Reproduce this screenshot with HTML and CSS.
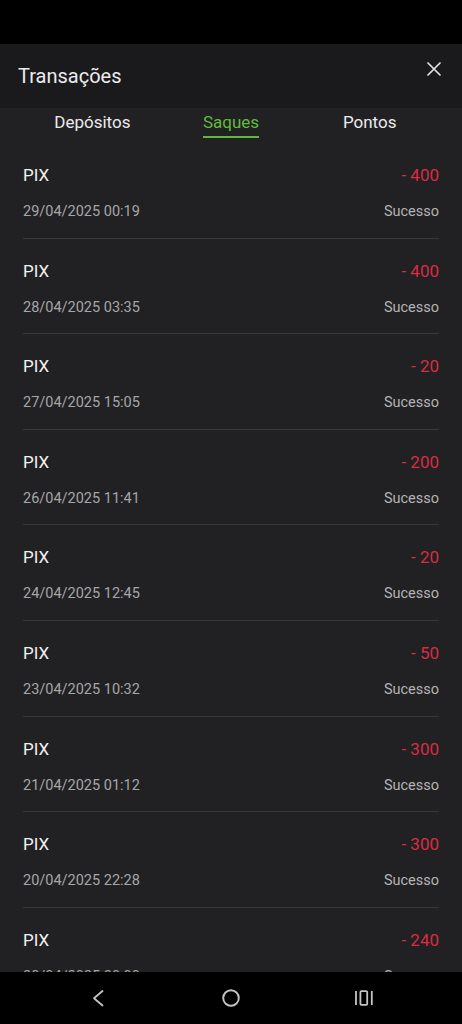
FILE: index.html
```html
<!DOCTYPE html>
<html lang="pt-BR">
<head>
<meta charset="utf-8">
<meta name="viewport" content="width=device-width, initial-scale=1">
<title>Transações</title>
<link rel="stylesheet" href="styles.css">
</head>
<body>
<div class="screen">
  <div class="status-bar"></div>
  <header class="header">
    <h1 class="title">Transações</h1>
    <button class="close" aria-label="Fechar">
      <svg width="14" height="14" viewBox="0 0 14 14"><path d="M1 1 L13 13 M13 1 L1 13" stroke="#e2e2e2" stroke-width="1.7" stroke-linecap="round" fill="none"/></svg>
    </button>
  </header>
  <nav class="tabs">
    <div class="tab"><span class="tab-label">Depósitos</span></div>
    <div class="tab"><span class="tab-label active">Saques</span></div>
    <div class="tab"><span class="tab-label">Pontos</span></div>
  </nav>
  <main class="list">
    <div class="row"><div class="line"><span class="method">PIX</span><span class="amount">- 400</span></div><div class="line"><span class="date">29/04/2025 00:19</span><span class="status">Sucesso</span></div></div>
    <div class="row"><div class="line"><span class="method">PIX</span><span class="amount">- 400</span></div><div class="line"><span class="date">28/04/2025 03:35</span><span class="status">Sucesso</span></div></div>
    <div class="row"><div class="line"><span class="method">PIX</span><span class="amount">- 20</span></div><div class="line"><span class="date">27/04/2025 15:05</span><span class="status">Sucesso</span></div></div>
    <div class="row"><div class="line"><span class="method">PIX</span><span class="amount">- 200</span></div><div class="line"><span class="date">26/04/2025 11:41</span><span class="status">Sucesso</span></div></div>
    <div class="row"><div class="line"><span class="method">PIX</span><span class="amount">- 20</span></div><div class="line"><span class="date">24/04/2025 12:45</span><span class="status">Sucesso</span></div></div>
    <div class="row"><div class="line"><span class="method">PIX</span><span class="amount">- 50</span></div><div class="line"><span class="date">23/04/2025 10:32</span><span class="status">Sucesso</span></div></div>
    <div class="row"><div class="line"><span class="method">PIX</span><span class="amount">- 300</span></div><div class="line"><span class="date">21/04/2025 01:12</span><span class="status">Sucesso</span></div></div>
    <div class="row"><div class="line"><span class="method">PIX</span><span class="amount">- 300</span></div><div class="line"><span class="date">20/04/2025 22:28</span><span class="status">Sucesso</span></div></div>
    <div class="row"><div class="line"><span class="method">PIX</span><span class="amount">- 240</span></div><div class="line"><span class="date">20/04/2025 20:00</span><span class="status">Sucesso</span></div></div>
  </main>
  <footer class="navbar">
    <div class="nav-item">
      <svg width="14" height="18" viewBox="0 0 14 18"><path d="M11.5 2 L3 9.25 L11.5 16.5" stroke="#c4c4c4" stroke-width="1.8" fill="none" stroke-linecap="round" stroke-linejoin="round"/></svg>
    </div>
    <div class="nav-item">
      <svg width="20" height="20" viewBox="0 0 20 20"><circle cx="10" cy="10" r="7.8" stroke="#c4c4c4" stroke-width="1.9" fill="none"/></svg>
    </div>
    <div class="nav-item">
      <svg width="20" height="16" viewBox="0 0 20 16"><path d="M2 1 V15 M17.8 1 V15" stroke="#c4c4c4" stroke-width="1.8" fill="none"/><rect x="6.4" y="1.2" width="6.8" height="13.6" rx="1" stroke="#c4c4c4" stroke-width="1.8" fill="none"/></svg>
    </div>
  </footer>
</div>
</body>
</html>
```
FILE: styles.css
```css
* { box-sizing: border-box; }
html, body { margin: 0; padding: 0; }
body {
  background: #212123;
  font-family: Roboto, "Noto Sans", sans-serif;
  color: #f0f0f0;
}
.screen {
  width: 462px;
  height: 1024px;
  display: flex;
  flex-direction: column;
  overflow: hidden;
  background: #212123;
}
.status-bar {
  height: 44px;
  flex: none;
  background: #000;
}
.header {
  height: 64px;
  flex: none;
  background: #1a1a1c;
  display: flex;
  align-items: center;
  justify-content: space-between;
  padding: 0 21px 0 18px;
}
.title {
  margin: 0;
  font-size: 20px;
  line-height: 24px;
  font-weight: 400;
  color: #ececec;
}
.close {
  align-self: flex-start;
  margin-top: 18px;
  width: 14px;
  height: 14px;
  padding: 0;
  border: 0;
  background: none;
  display: block;
}
.close svg { display: block; }
.tabs {
  flex: none;
  display: grid;
  grid-template-columns: repeat(3, 1fr);
  padding: 4px 23px 0;
}
.tab {
  display: flex;
  justify-content: center;
}
.tab-label {
  font-size: 17px;
  line-height: 20px;
  color: #ececec;
  padding-bottom: 3.5px;
  border-bottom: 2px solid transparent;
}
.tab-label.active {
  color: #62bb3e;
  border-bottom-color: #5fb83b;
}
.list {
  flex: 1;
  min-height: 0;
  overflow: hidden;
  padding: 5.5px 23px 0;
}
.row {
  padding: 22px 0 16.6px;
  border-bottom: 1px solid #38383b;
}
.line {
  display: flex;
  justify-content: space-between;
  align-items: baseline;
}
.line + .line { margin-top: 18px; }
.method {
  font-size: 17px;
  line-height: 20px;
  color: #f2f2f2;
}
.amount {
  font-size: 17px;
  line-height: 20px;
  color: #d92c44;
}
.date {
  font-size: 14.5px;
  line-height: 18px;
  color: #a6a6a8;
}
.status {
  font-size: 14.5px;
  line-height: 18px;
  color: #b4b4b6;
}
.navbar {
  height: 52px;
  flex: none;
  background: #000;
  display: flex;
  justify-content: center;
  align-items: center;
}
.nav-item {
  width: 133px;
  display: flex;
  justify-content: center;
  align-items: center;
}
.nav-item svg { display: block; }
```
